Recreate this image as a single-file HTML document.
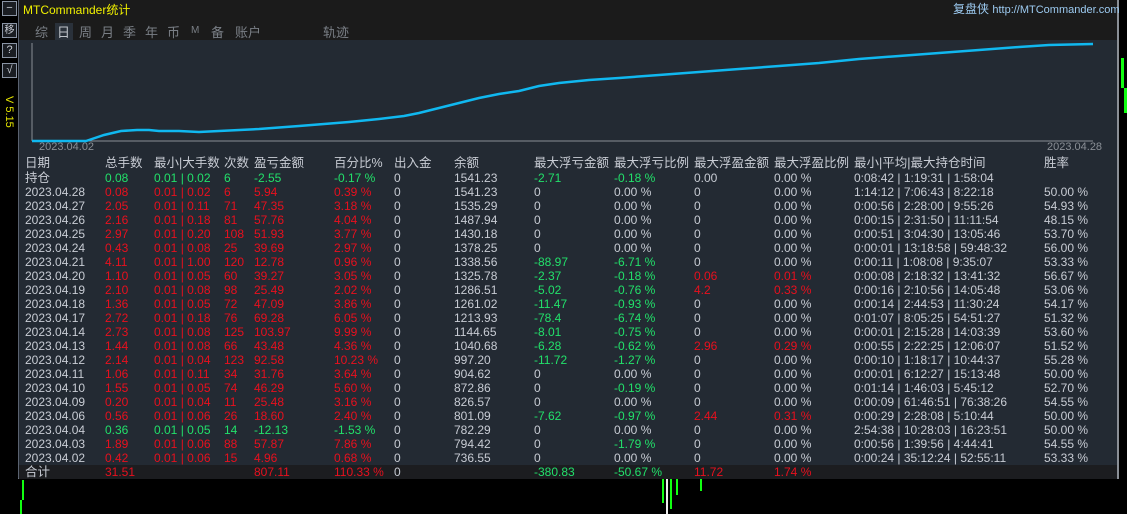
<!DOCTYPE html><html><head><meta charset="utf-8"><style>
*{margin:0;padding:0;box-sizing:border-box}
body{width:1127px;height:514px;background:#000;position:relative;overflow:hidden;font-family:"Liberation Sans","Noto Sans CJK SC",sans-serif;font-size:12px;color:#c8ccd4}
.btn{position:absolute;left:2px;width:15px;height:15px;border:1px solid #8a94a4;background:#1a1d22;color:#c8ccd4;font-size:11px;text-align:center;line-height:13px}
#panel{position:absolute;left:18px;top:0;width:1101px;height:479px;background:#232a33;border-left:1px solid #5a6270;border-right:2px solid #8a8f96;border-bottom:1px solid #8a8f96}
#hdr{position:absolute;left:0;top:0;width:100%;height:40px;background:#1b1b1b}
.r{position:absolute;white-space:nowrap;line-height:14px}
.g{color:#22e06a}.d{color:#e8101e}
.tab{position:absolute;top:22px;font-size:13px;color:#7a7f86}
</style></head><body>
<div class="btn" style="top:1px">−</div>
<div class="btn" style="top:23px;font-size:10px">移</div>
<div class="btn" style="top:43px">?</div>
<div class="btn" style="top:63px">√</div>
<div class="r" style="top:96px;color:#e8e800;font-size:11px;transform:rotate(90deg);transform-origin:left top;left:16px">V 5.15</div>
<div style="position:absolute;left:22px;top:480px;width:2px;height:20px;background:#1f1"></div>
<div style="position:absolute;left:20px;top:500px;width:2px;height:14px;background:#1f1"></div>
<div style="position:absolute;left:662px;top:479px;width:2px;height:24px;background:#1f1"></div>
<div style="position:absolute;left:666px;top:479px;width:2px;height:35px;background:#eee"></div>
<div style="position:absolute;left:670px;top:479px;width:2px;height:30px;background:#1f1"></div>
<div style="position:absolute;left:676px;top:479px;width:2px;height:16px;background:#1f1"></div>
<div style="position:absolute;left:700px;top:479px;width:2px;height:12px;background:#1f1"></div>
<div style="position:absolute;left:1121px;top:58px;width:3px;height:30px;background:#1f1"></div>
<div style="position:absolute;left:1124px;top:88px;width:3px;height:25px;background:#1f1"></div>
<div id="panel">
<div id="hdr"></div>
<div class="r" style="left:4px;top:3px;color:#f0f000;font-size:12px">MTCommander统计</div>
<div class="r" style="left:934px;top:2px;color:#9ccaf0;font-size:12px">复盘侠 <span style="font-size:11px">http://MTCommander.com</span></div>
<div style="position:absolute;left:36px;top:23px;width:18px;height:17px;background:#2a313a"></div>
<span class="tab" style="left:16px">综</span><span class="tab" style="left:38px;color:#c0c4ca">日</span><span class="tab" style="left:60px">周</span><span class="tab" style="left:82px">月</span><span class="tab" style="left:104px">季</span><span class="tab" style="left:126px">年</span><span class="tab" style="left:148px">币</span><span class="tab" style="left:172px;font-size:10px;top:25px">M</span><span class="tab" style="left:192px">备</span><span class="tab" style="left:216px">账户</span><span class="tab" style="left:304px">轨迹</span>
<svg style="position:absolute;left:0;top:40px" width="1100" height="115">
<line x1="13" y1="3" x2="13" y2="101" stroke="#8a8f96"/>
<line x1="13" y1="101" x2="1074" y2="101" stroke="#8a8f96"/>
<polyline fill="none" stroke="#10b8f0" stroke-width="2.5" points="13,101 67,101 85,95 102,91 118,90 130,90 140,91 160,91 180,92 200,91 240,89 280,86 330,82 360,79 385,76 400,73 420,68 440,63 460,58 480,54 500,51 520,46 540,43 570,40 600,38 640,35 680,32 720,29 760,26 800,23 840,19 880,16 920,13 960,10 1000,7 1030,5 1074,4"/>
<text x="20" y="110" fill="#8a8f96" font-size="11" font-family="Liberation Sans">2023.04.02</text>
<text x="1028" y="110" fill="#8a8f96" font-size="11" font-family="Liberation Sans">2023.04.28</text>
</svg>
<div style="position:absolute;left:0;top:465px;width:100%;height:14px;background:#1c1d20"></div>
<div id="tbl"></div>
</div>
<script>
var cols=[6,86,135,205,235,315,375,435,515,595,675,755,835,1025];
var H=["日期","总手数","最小|大手数","次数","盈亏金额","百分比%","出入金","余额","最大浮亏金额","最大浮亏比例","最大浮盈金额","最大浮盈比例","最小|平均|最大持仓时间","胜率"];
var rows=[
["持仓","g0.08","g0.01 | 0.02","g6","g-2.55","g-0.17 %","0","1541.23","g-2.71","g-0.18 %","0.00","0.00 %","0:08:42 | 1:19:31 | 1:58:04",""],
["2023.04.28","d0.08","d0.01 | 0.02","d6","d5.94","d0.39 %","0","1541.23","0","0.00 %","0","0.00 %","1:14:12 | 7:06:43 | 8:22:18","50.00 %"],
["2023.04.27","d2.05","d0.01 | 0.11","d71","d47.35","d3.18 %","0","1535.29","0","0.00 %","0","0.00 %","0:00:56 | 2:28:00 | 9:55:26","54.93 %"],
["2023.04.26","d2.16","d0.01 | 0.18","d81","d57.76","d4.04 %","0","1487.94","0","0.00 %","0","0.00 %","0:00:15 | 2:31:50 | 11:11:54","48.15 %"],
["2023.04.25","d2.97","d0.01 | 0.20","d108","d51.93","d3.77 %","0","1430.18","0","0.00 %","0","0.00 %","0:00:51 | 3:04:30 | 13:05:46","53.70 %"],
["2023.04.24","d0.43","d0.01 | 0.08","d25","d39.69","d2.97 %","0","1378.25","0","0.00 %","0","0.00 %","0:00:01 | 13:18:58 | 59:48:32","56.00 %"],
["2023.04.21","d4.11","d0.01 | 1.00","d120","d12.78","d0.96 %","0","1338.56","g-88.97","g-6.71 %","0","0.00 %","0:00:11 | 1:08:08 | 9:35:07","53.33 %"],
["2023.04.20","d1.10","d0.01 | 0.05","d60","d39.27","d3.05 %","0","1325.78","g-2.37","g-0.18 %","d0.06","d0.01 %","0:00:08 | 2:18:32 | 13:41:32","56.67 %"],
["2023.04.19","d2.10","d0.01 | 0.08","d98","d25.49","d2.02 %","0","1286.51","g-5.02","g-0.76 %","d4.2","d0.33 %","0:00:16 | 2:10:56 | 14:05:48","53.06 %"],
["2023.04.18","d1.36","d0.01 | 0.05","d72","d47.09","d3.86 %","0","1261.02","g-11.47","g-0.93 %","0","0.00 %","0:00:14 | 2:44:53 | 11:30:24","54.17 %"],
["2023.04.17","d2.72","d0.01 | 0.18","d76","d69.28","d6.05 %","0","1213.93","g-78.4","g-6.74 %","0","0.00 %","0:01:07 | 8:05:25 | 54:51:27","51.32 %"],
["2023.04.14","d2.73","d0.01 | 0.08","d125","d103.97","d9.99 %","0","1144.65","g-8.01","g-0.75 %","0","0.00 %","0:00:01 | 2:15:28 | 14:03:39","53.60 %"],
["2023.04.13","d1.44","d0.01 | 0.08","d66","d43.48","d4.36 %","0","1040.68","g-6.28","g-0.62 %","d2.96","d0.29 %","0:00:55 | 2:22:25 | 12:06:07","51.52 %"],
["2023.04.12","d2.14","d0.01 | 0.04","d123","d92.58","d10.23 %","0","997.20","g-11.72","g-1.27 %","0","0.00 %","0:00:10 | 1:18:17 | 10:44:37","55.28 %"],
["2023.04.11","d1.06","d0.01 | 0.11","d34","d31.76","d3.64 %","0","904.62","0","0.00 %","0","0.00 %","0:00:01 | 6:12:27 | 15:13:48","50.00 %"],
["2023.04.10","d1.55","d0.01 | 0.05","d74","d46.29","d5.60 %","0","872.86","0","g-0.19 %","0","0.00 %","0:01:14 | 1:46:03 | 5:45:12","52.70 %"],
["2023.04.09","d0.20","d0.01 | 0.04","d11","d25.48","d3.16 %","0","826.57","0","0.00 %","0","0.00 %","0:00:09 | 61:46:51 | 76:38:26","54.55 %"],
["2023.04.06","d0.56","d0.01 | 0.06","d26","d18.60","d2.40 %","0","801.09","g-7.62","g-0.97 %","d2.44","d0.31 %","0:00:29 | 2:28:08 | 5:10:44","50.00 %"],
["2023.04.04","g0.36","g0.01 | 0.05","g14","g-12.13","g-1.53 %","0","782.29","0","0.00 %","0","0.00 %","2:54:38 | 10:28:03 | 16:23:51","50.00 %"],
["2023.04.03","d1.89","d0.01 | 0.06","d88","d57.87","d7.86 %","0","794.42","0","g-1.79 %","0","0.00 %","0:00:56 | 1:39:56 | 4:44:41","54.55 %"],
["2023.04.02","d0.42","d0.01 | 0.06","d15","d4.96","d0.68 %","0","736.55","0","0.00 %","0","0.00 %","0:00:24 | 35:12:24 | 52:55:11","53.33 %"],
["合计","d31.51","","","d807.11","d110.33 %","0","","g-380.83","g-50.67 %","d11.72","d1.74 %","",""]];
var h="";
H.forEach(function(t,i){h+='<div class="r" style="left:'+cols[i]+'px;top:156px;font-size:12.5px">'+t+'</div>'});
rows.forEach(function(r,j){var y=171+j*14;r.forEach(function(c,i){var cl="";if(c[0]=="g"||c[0]=="d"){cl=c[0];c=c.slice(1)}var fs=(j==0||j==21)&&i==0?"font-size:12.5px;":"";h+='<div class="r '+cl+'" style="'+fs+'left:'+cols[i]+'px;top:'+y+'px">'+c+'</div>'})});
document.getElementById("tbl").innerHTML=h;
</script>
</body></html>
